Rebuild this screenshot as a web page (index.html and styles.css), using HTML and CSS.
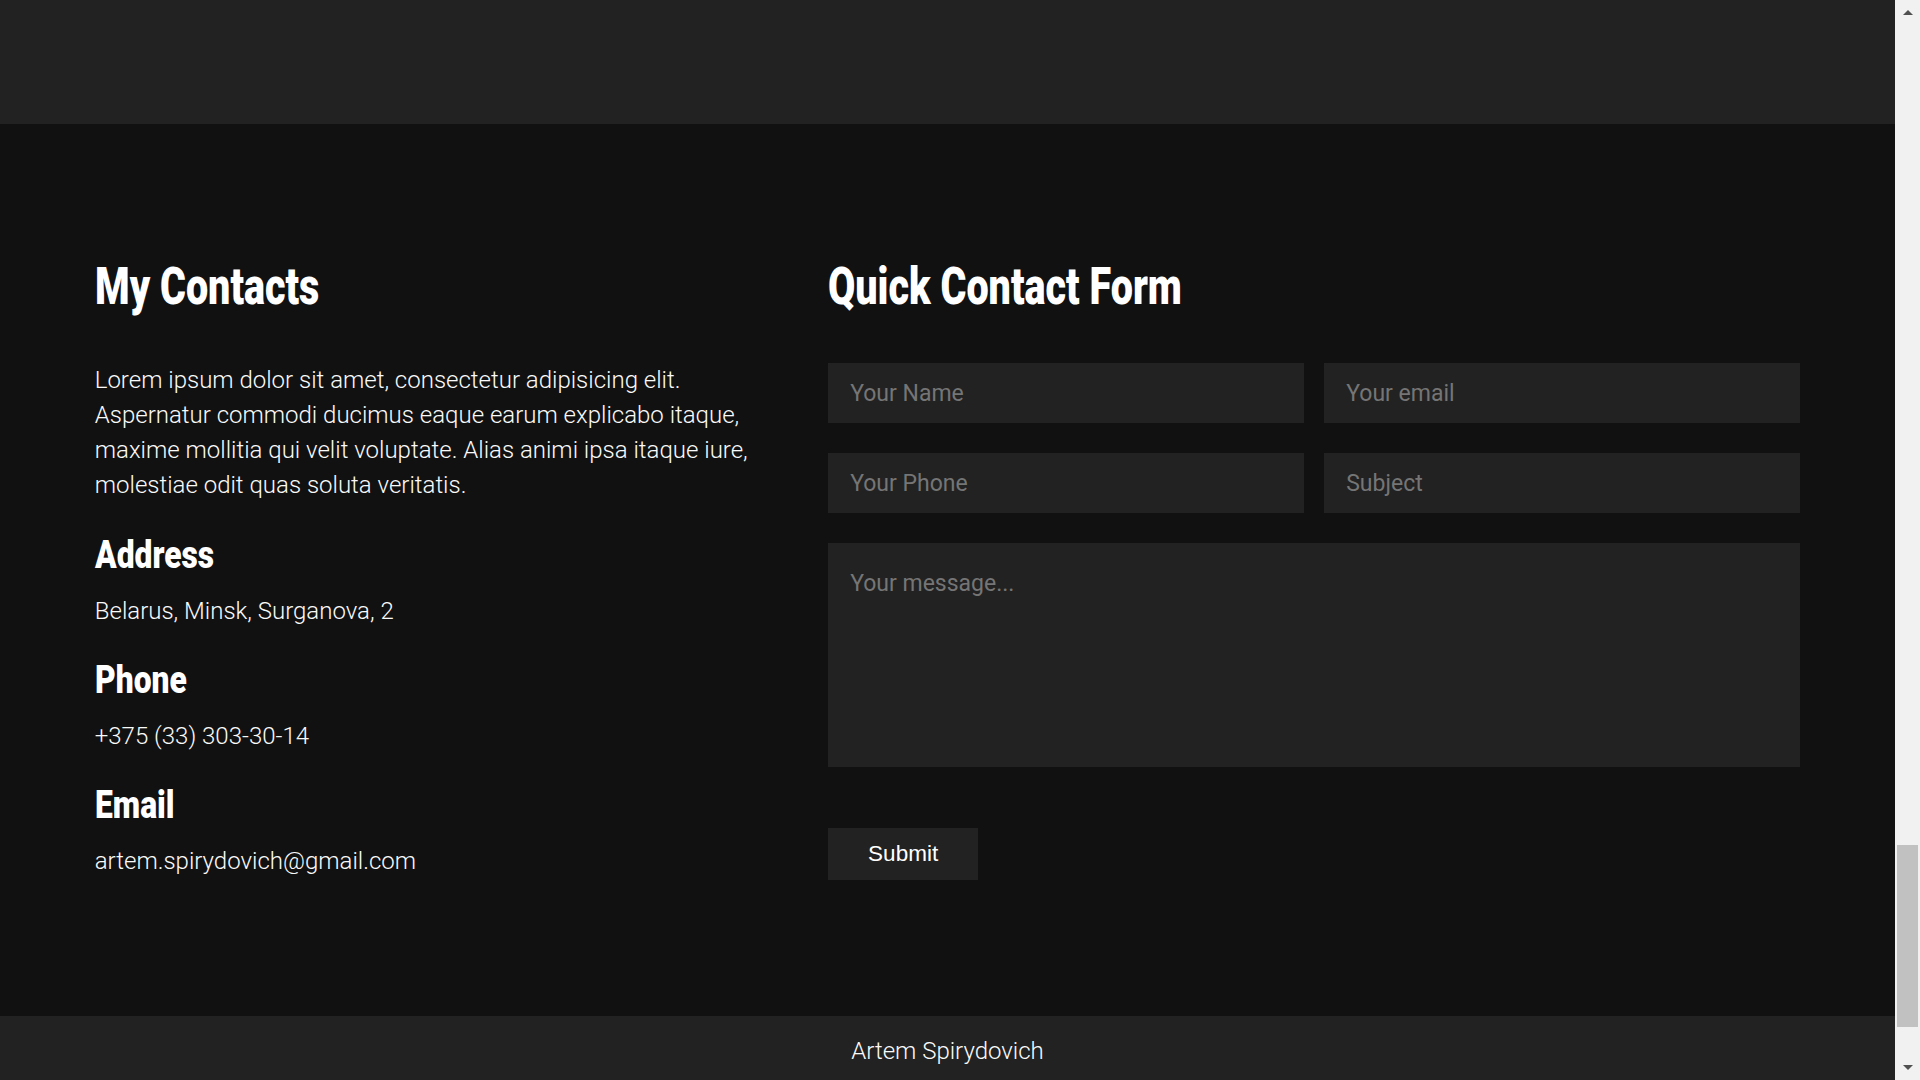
FILE: index.html
```html
<!DOCTYPE html>
<html lang="en">
<head>
<meta charset="utf-8">
<title>Contacts</title>
<link rel="stylesheet" href="styles.css">
</head>
<body>
<div class="page">
  <div class="top-band"></div>
  <section class="contacts">
    <div class="contacts-info">
      <h2 class="heading">My Contacts</h2>
      <p class="intro">Lorem ipsum dolor sit amet, consectetur adipisicing elit. Aspernatur commodi ducimus eaque earum explicabo itaque, maxime mollitia qui velit voluptate. Alias animi ipsa itaque iure, molestiae odit quas soluta veritatis.</p>
      <h3 class="subheading">Address</h3>
      <p class="detail">Belarus, Minsk, Surganova, 2</p>
      <h3 class="subheading">Phone</h3>
      <p class="detail">+375 (33) 303-30-14</p>
      <h3 class="subheading">Email</h3>
      <p class="detail">artem.spirydovich@gmail.com</p>
    </div>
    <div class="contacts-form">
      <h2 class="heading">Quick Contact Form</h2>
      <form class="form">
        <div class="form-grid">
          <input class="field" type="text" placeholder="Your Name">
          <input class="field" type="email" placeholder="Your email">
          <input class="field" type="tel" placeholder="Your Phone">
          <input class="field" type="text" placeholder="Subject">
          <textarea class="field message" placeholder="Your message..."></textarea>
        </div>
        <button class="submit" type="button">Submit</button>
      </form>
    </div>
  </section>
  <footer class="footer">Artem Spirydovich</footer>
</div>
<div class="scrollbar">
  <div class="sb-btn"><span class="arrow-up"></span></div>
  <div class="sb-track"><div class="sb-thumb"></div></div>
  <div class="sb-btn"><span class="arrow-down"></span></div>
</div>
</body>
</html>
```
FILE: styles.css
```css
html, body {
  margin: 0;
  padding: 0;
  height: 1080px;
  overflow: hidden;
}
body {
  display: flex;
  background: #111;
  font-family: "Roboto", "Liberation Sans", sans-serif;
  color: #fff;
}
.page {
  flex: 1;
  display: flex;
  flex-direction: column;
  min-width: 0;
}
.top-band {
  height: 124px;
  background: #222;
}
.contacts {
  height: 892px;
  box-sizing: border-box;
  padding: 137px 5% 0;
  background: #111;
  display: grid;
  grid-template-columns: 40% 57%;
  justify-content: space-between;
  align-items: start;
}
.heading {
  margin: 0 0 50px;
  font-family: "Roboto", sans-serif;
  font-weight: 900;
  font-size: 52px;
  line-height: 52px;
  color: #fff;
  transform: scaleX(0.76);
  transform-origin: left center;
  white-space: nowrap;
}
.intro {
  margin: 0 0 33px;
  font-weight: 300;
  font-size: 24px;
  line-height: 35px;
  color: #fafafa;
}
.subheading {
  margin: 0 0 18px;
  font-family: "Roboto", sans-serif;
  font-weight: 900;
  font-size: 39px;
  line-height: 39px;
  color: #fff;
  transform: scaleX(0.815);
  transform-origin: left center;
  white-space: nowrap;
}
.detail {
  margin: 0 0 32px;
  font-weight: 300;
  font-size: 24px;
  line-height: 36px;
  color: #fafafa;
}
.form {
  margin: 0;
}
.form-grid {
  display: grid;
  grid-template-columns: 1fr 1fr;
  column-gap: 20px;
  row-gap: 30px;
}
.field {
  display: block;
  width: 100%;
  height: 60px;
  box-sizing: border-box;
  margin: 0;
  padding: 0 22px;
  border: none;
  outline: none;
  border-radius: 0;
  background: #222;
  color: #fff;
  font-family: "Roboto", sans-serif;
  font-weight: 400;
  font-size: 23px;
}
.field::placeholder {
  color: #757575;
}
.message {
  grid-column: 1 / -1;
  height: 224px;
  padding: 24px 22px 22px;
  line-height: 1.5;
  resize: none;
}
.submit {
  display: block;
  margin-top: 61px;
  width: 150px;
  height: 52px;
  border: none;
  border-radius: 0;
  background: #222;
  color: #fff;
  font-family: "Liberation Sans", Arial, sans-serif;
  font-size: 22.5px;
  padding: 0;
}
.footer {
  height: 64px;
  box-sizing: border-box;
  padding-top: 17px;
  background: #222;
  text-align: center;
  font-weight: 300;
  font-size: 24px;
  line-height: 36px;
  color: #fafafa;
}
.scrollbar {
  width: 25px;
  flex: none;
  display: flex;
  flex-direction: column;
  background: #f1f1f1;
}
.sb-btn {
  height: 25px;
  display: flex;
  align-items: center;
  justify-content: center;
}
.arrow-up {
  width: 0;
  height: 0;
  border-left: 5px solid transparent;
  border-right: 5px solid transparent;
  border-bottom: 5px solid #505050;
}
.arrow-down {
  width: 0;
  height: 0;
  border-left: 5px solid transparent;
  border-right: 5px solid transparent;
  border-top: 5px solid #505050;
}
.sb-track {
  flex: 1;
}
.sb-thumb {
  margin: 820px 2px 0;
  height: 182px;
  background: #c1c1c1;
}
```
